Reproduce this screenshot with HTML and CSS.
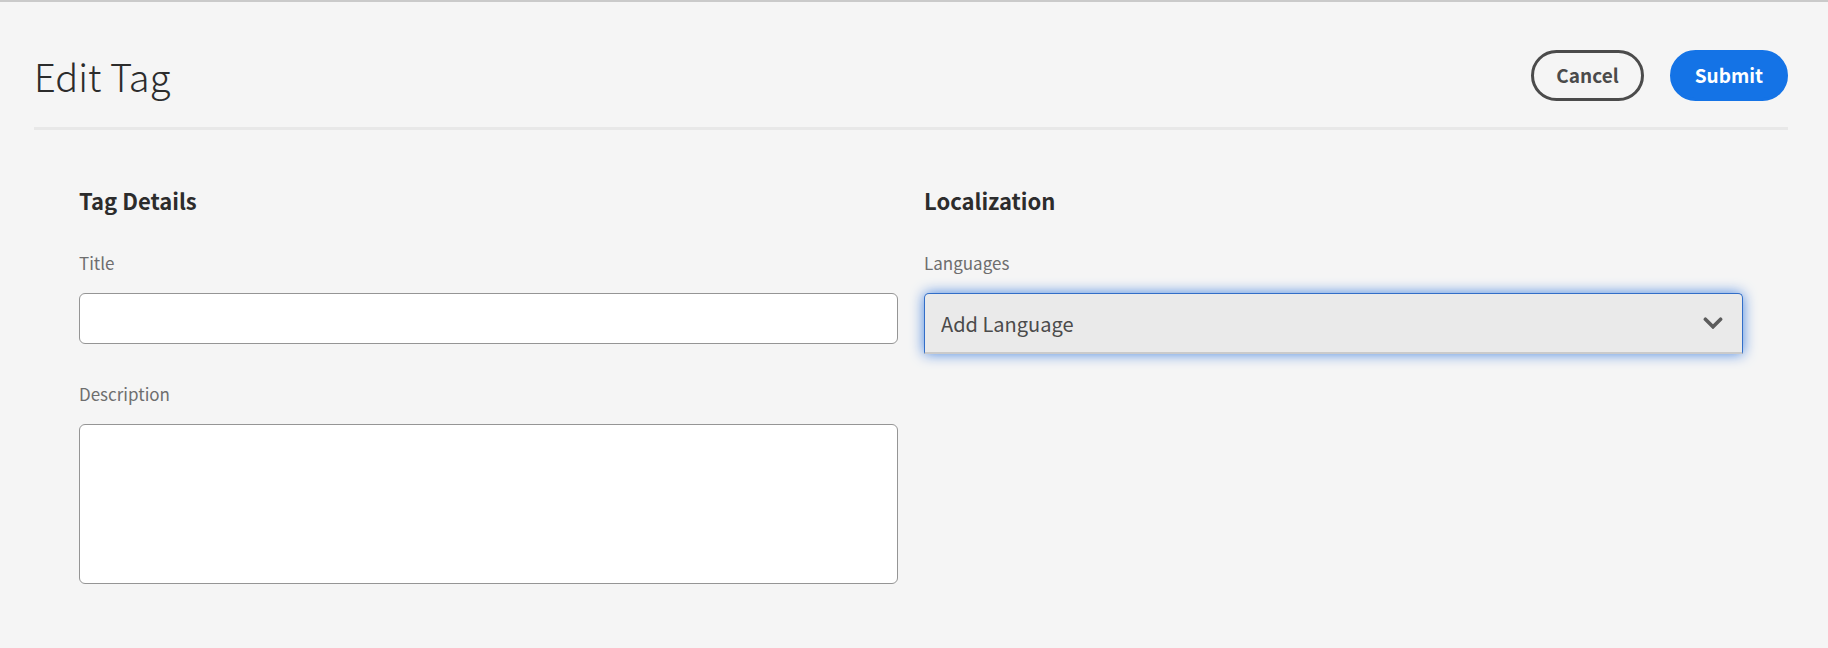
FILE: index.html
```html
<!DOCTYPE html>
<html lang="en">
<head>
<meta charset="utf-8">
<title>Edit Tag</title>
<link rel="stylesheet" href="styles.css">
</head>
<body>
<form class="page">
  <header class="header">
    <h1 class="header-title">Edit Tag</h1>
    <div class="actions">
      <button type="button" class="button button-secondary">Cancel</button>
      <button type="submit" class="button button-primary">Submit</button>
    </div>
  </header>
  <main class="columns">
    <section class="column">
      <h2 class="section-title">Tag Details</h2>
      <div class="field">
        <label class="label" for="title">Title</label>
        <input class="input" type="text" id="title">
      </div>
      <div class="field">
        <label class="label" for="description">Description</label>
        <textarea class="input input-multiline" id="description"></textarea>
      </div>
    </section>
    <section class="column">
      <h2 class="section-title">Localization</h2>
      <div class="field">
        <label class="label" for="languages">Languages</label>
        <div class="select-wrap">
          <select class="select" id="languages">
            <option>Add Language</option>
          </select>
          <svg class="chevron" viewBox="0 0 20 12" aria-hidden="true"><path d="M2.4 2.2 10 9.8 17.6 2.2"/></svg>
        </div>
      </div>
    </section>
  </main>
</form>
</body>
</html>
```
FILE: styles.css
```css
* { box-sizing: border-box; }

body {
  margin: 0;
  min-height: 100vh;
  background: #f5f5f5;
  border-top: 2px solid #cacaca;
  color: #2c2c2c;
  font-family: "Noto Sans CJK JP", "Noto Sans", sans-serif;
}

.page { padding: 0 40px 0 34px; }

.header {
  display: flex;
  align-items: center;
  justify-content: space-between;
  padding: 48px 0 26px;
  border-bottom: 3px solid #e8e8e8;
}

.header-title {
  margin: 0;
  font-size: 38px;
  line-height: 51px;
  font-weight: 300;
}

.actions { display: flex; gap: 26px; }

.button {
  height: 51px;
  padding: 0 22px 2px;
  border: 3px solid;
  border-radius: 26px;
  font: 700 19px/24px "Noto Sans CJK JP", "Noto Sans", sans-serif;
}

.button-secondary { background: transparent; border-color: #4b4b4b; color: #4b4b4b; }
.button-primary { background: #1473e6; border-color: #1473e6; color: #fff; }

.columns {
  display: grid;
  grid-template-columns: 1fr 1fr;
  gap: 26px;
  padding: 54px 45px 48px;
}

.section-title {
  margin: 0 0 33px;
  font-size: 22px;
  line-height: 32px;
  font-weight: 700;
}

.field { margin-bottom: 36px; }

.label {
  display: block;
  margin-bottom: 16px;
  font-size: 17px;
  line-height: 28px;
  color: #6e6e6e;
}

.input {
  display: block;
  width: 100%;
  height: 51px;
  padding: 0 16px;
  border: 1px solid #959595;
  border-radius: 6px;
  background: #fff;
  color: #4b4b4b;
  font: 400 20px/32px "Noto Sans CJK JP", "Noto Sans", sans-serif;
}

.input-multiline { height: 160px; padding: 8px 16px; resize: none; }

.select-wrap { position: relative; }

.select {
  display: block;
  appearance: none;
  width: 100%;
  height: 61px;
  padding: 2px 48px 0 16px;
  border: 1px solid #326ec8;
  border-bottom: 2px solid #cacaca;
  border-radius: 5px 5px 0 0;
  background: #eaeaea;
  box-shadow: 0 0 14px #4a86e0;
  color: #4b4b4b;
  font: 400 20px/32px "Noto Sans CJK JP", "Noto Sans", sans-serif;
}

.chevron {
  position: absolute;
  top: 24px;
  right: 20px;
  width: 20px;
  height: 12px;
  fill: none;
  stroke: #5c5c5c;
  stroke-width: 3.6;
  stroke-linecap: round;
  pointer-events: none;
}
```
